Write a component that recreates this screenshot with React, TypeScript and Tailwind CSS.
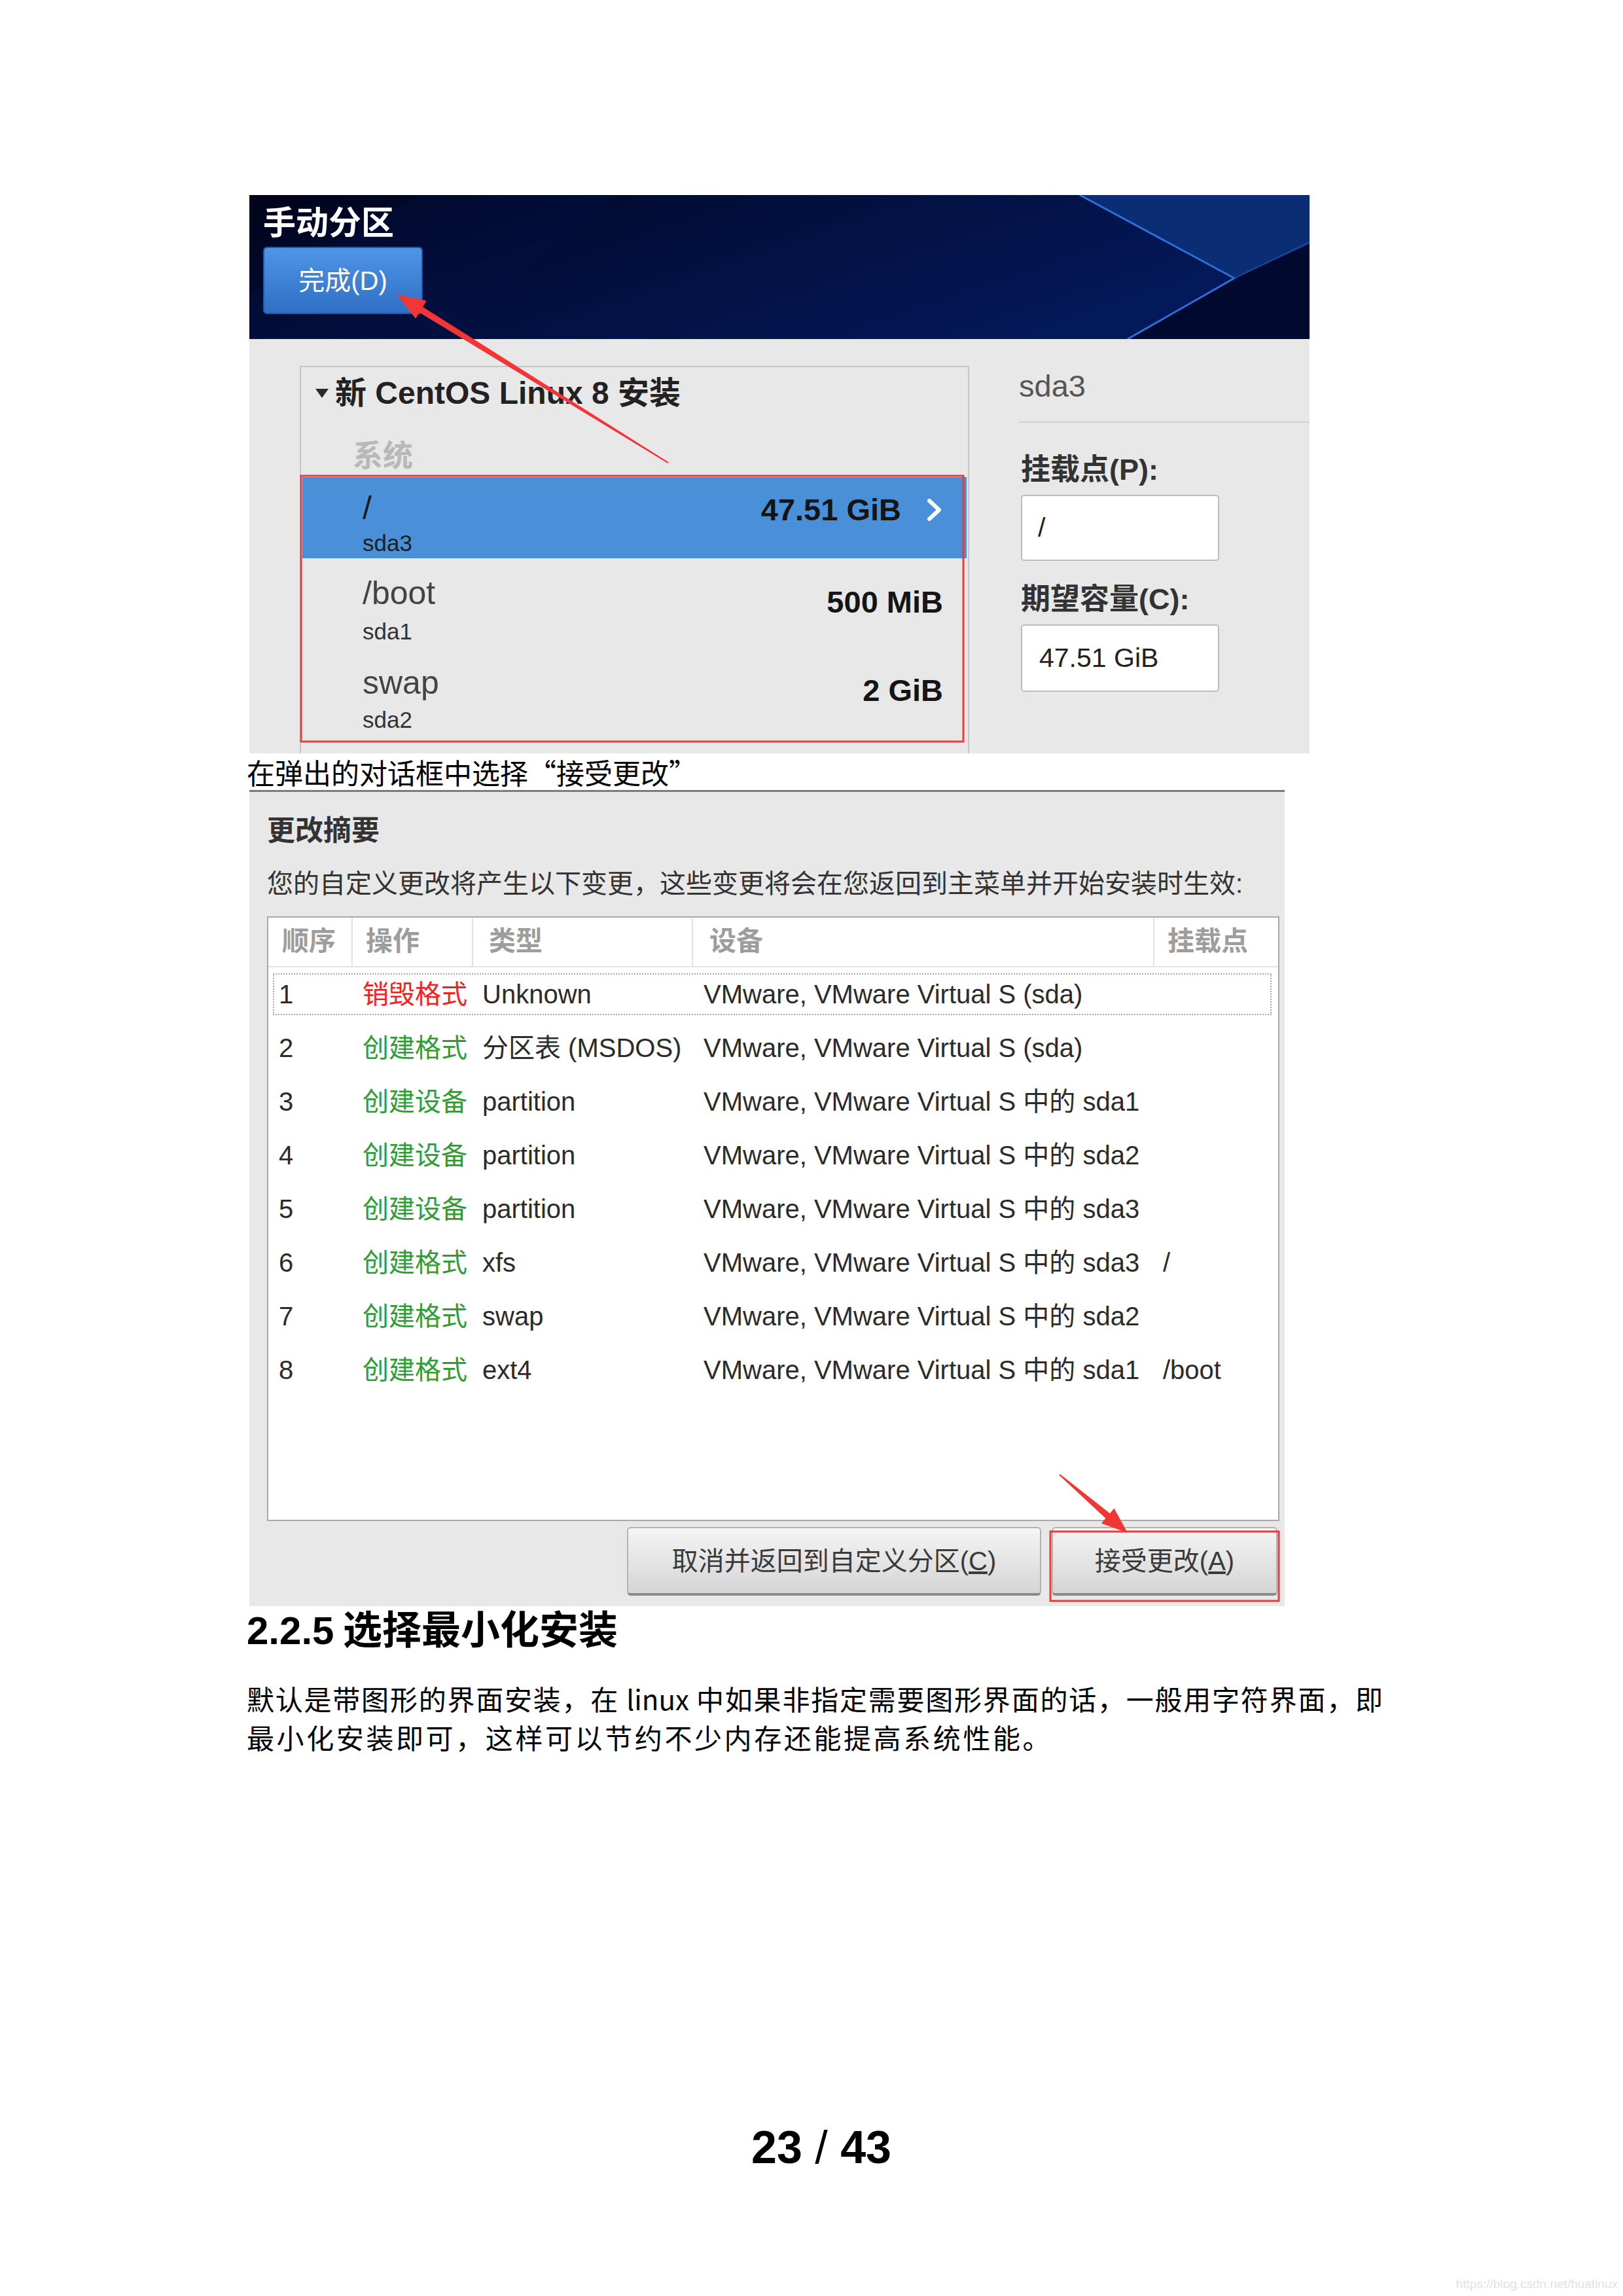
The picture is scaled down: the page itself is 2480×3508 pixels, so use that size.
import React from 'react';

type Pt = [number, number];

const UI = "[font-family:'Liberation_Sans','Noto_Sans_CJK_SC',sans-serif]";
const DOC = "[font-family:'Noto_Sans_CJK_SC','Liberation_Serif',serif]";

// tapered annotation arrow, narrow at the tail, head at the tip
function arrowPoints(tail: Pt, tip: Pt, head = 44, wing = 16, shaft = 5) {
  const dx = tip[0] - tail[0];
  const dy = tip[1] - tail[1];
  const len = Math.hypot(dx, dy);
  const ux = dx / len;
  const uy = dy / len;
  const nx = -uy;
  const ny = ux;
  const bx = tip[0] - ux * head;
  const by = tip[1] - uy * head;
  const pts: Pt[] = [
    [tail[0] + nx, tail[1] + ny],
    [bx + nx * shaft, by + ny * shaft],
    [bx + nx * wing, by + ny * wing],
    tip,
    [bx - nx * wing, by - ny * wing],
    [bx - nx * shaft, by - ny * shaft],
    [tail[0] - nx, tail[1] - ny],
  ];
  return pts.map(p => `${p[0].toFixed(1)},${p[1].toFixed(1)}`).join(' ');
}

function HeaderArt() {
  return (
    <svg className="absolute inset-0 w-full h-full" viewBox="0 0 1620 220" preserveAspectRatio="none">
      <defs>
        <linearGradient id="hdr" x1="0" y1="0" x2="1" y2="0.4">
          <stop offset="0" stopColor="#00031a" />
          <stop offset="0.45" stopColor="#020f3d" />
          <stop offset="1" stopColor="#04195a" />
        </linearGradient>
      </defs>
      <rect width="1620" height="220" fill="url(#hdr)" />
      <polygon points="0,220 0,150 260,0 560,0 300,220" fill="#031244" opacity="0.35" />
      <polygon points="1269,0 1620,0 1620,75 1505,127" fill="#0b2d74" />
      <polygon points="1505,127 1620,75 1620,220 1342,220" fill="#010a2e" />
      <polyline points="1269,0 1505,127 1342,220" fill="none" stroke="#2b6fd8" strokeWidth="3" />
      <line x1="1505" y1="127" x2="1620" y2="72" stroke="#1a4a9c" strokeWidth="2" />
    </svg>
  );
}

function Chevron() {
  return (
    <svg width="26" height="36" viewBox="0 0 26 36" className="ml-[38px]">
      <polyline points="5,4 20,18 5,32" fill="none" stroke="#ffffff" strokeWidth="6" strokeLinecap="round" strokeLinejoin="round" />
    </svg>
  );
}

function Partition() {
  return (
    <div className={`w-[1620px] h-[853px] flex flex-col ${UI}`}>
      <div className="relative h-[220px] pl-[21px] pt-[13px] overflow-hidden">
        <HeaderArt />
        <div className="relative text-[50px] leading-[60px] font-bold text-white">手动分区</div>
        <div className="relative mt-[6px] w-[244px] h-[103px] rounded-[6px] border-2 border-[#1d58aa] bg-gradient-to-b from-[#4f95e6] to-[#2f6fc5] flex items-center justify-center text-[40px] text-white">
          完成(D)
        </div>
      </div>

      <div className="flex-1 bg-[#e8e8e8] flex pl-[77px] pt-[41px] overflow-hidden">
        <div className="w-[1023px] border-x-2 border-t-2 border-[#c6c6c6]">
          <div className="flex items-center pt-[10px] pl-[22px] h-[70px]">
            <svg width="20" height="14" viewBox="0 0 20 14">
              <polygon points="0,0 20,0 10,14" fill="#2a2a2a" />
            </svg>
            <span className="ml-[10px] text-[48px] leading-[60px] font-bold text-[#222]">新 CentOS Linux 8 安装</span>
          </div>
          <div className="mt-[37px] pl-[79px] text-[46px] leading-[56px] font-bold text-[#b8b8b8]">系统</div>

          <div className="mt-[5px] mx-[2px] h-[124px] bg-[#4a90d9] flex justify-between pl-[92px] pr-[36px]">
            <div className="pt-[19px]">
              <div className="text-[50px] leading-[56px] text-[#1a1a1a]">/</div>
              <div className="mt-[6px] text-[35px] leading-[40px] text-[#1e1e1e]">sda3</div>
            </div>
            <div className="pt-[22px] flex items-center h-[78px]">
              <span className="text-[47px] leading-[56px] font-bold text-[#151515]">47.51 GiB</span>
              <Chevron />
            </div>
          </div>

          <div className="mx-[2px] h-[130px] flex justify-between pl-[92px] pr-[36px]">
            <div className="pt-[25px]">
              <div className="text-[50px] leading-[56px] text-[#444]">/boot</div>
              <div className="mt-[11px] text-[35px] leading-[40px] text-[#333]">sda1</div>
            </div>
            <div className="pt-[39px] text-[47px] leading-[56px] font-bold text-[#151515]">500 MiB</div>
          </div>

          <div className="mx-[2px] flex justify-between pl-[92px] pr-[36px]">
            <div className="pt-[32px]">
              <div className="text-[50px] leading-[56px] text-[#444]">swap</div>
              <div className="mt-[9px] text-[35px] leading-[40px] text-[#333]">sda2</div>
            </div>
            <div className="pt-[44px] text-[47px] leading-[56px] font-bold text-[#151515]">2 GiB</div>
          </div>
        </div>

        <div className="ml-[76px] flex-1 pt-[3px]">
          <div className="text-[47px] leading-[56px] text-[#555]">sda3</div>
          <div className="mt-[26px] h-[2px] bg-[#d0d0d0]" />
          <div className="mt-[44px] pl-[3px] text-[45px] leading-[56px] font-bold text-[#333]">挂载点(P):</div>
          <div className="mt-[10px] ml-[3px] w-[303px] h-[101px] bg-white border-2 border-[#bdbdbd] rounded-[5px] flex items-center pl-[24px] text-[41px] text-[#222]">
            /
          </div>
          <div className="mt-[31px] pl-[3px] text-[45px] leading-[56px] font-bold text-[#333]">期望容量(C):</div>
          <div className="mt-[10px] ml-[3px] w-[303px] h-[103px] bg-white border-2 border-[#bdbdbd] rounded-[5px] flex items-center pl-[26px] text-[41px] text-[#222]">
            47.51 GiB
          </div>
        </div>
      </div>
    </div>
  );
}

interface Change {
  no: number;
  action: string;
  destroy?: boolean;
  type: string;
  device: string;
  mount?: string;
}

const changes: Change[] = [
  { no: 1, action: '销毁格式', destroy: true, type: 'Unknown', device: 'VMware, VMware Virtual S (sda)' },
  { no: 2, action: '创建格式', type: '分区表 (MSDOS)', device: 'VMware, VMware Virtual S (sda)' },
  { no: 3, action: '创建设备', type: 'partition', device: 'VMware, VMware Virtual S 中的 sda1' },
  { no: 4, action: '创建设备', type: 'partition', device: 'VMware, VMware Virtual S 中的 sda2' },
  { no: 5, action: '创建设备', type: 'partition', device: 'VMware, VMware Virtual S 中的 sda3' },
  { no: 6, action: '创建格式', type: 'xfs', device: 'VMware, VMware Virtual S 中的 sda3', mount: '/' },
  { no: 7, action: '创建格式', type: 'swap', device: 'VMware, VMware Virtual S 中的 sda2' },
  { no: 8, action: '创建格式', type: 'ext4', device: 'VMware, VMware Virtual S 中的 sda1', mount: '/boot' },
];

const cols = 'grid grid-cols-[129px_184px_336px_705px_1fr]';

function Summary() {
  return (
    <div className={`w-[1582px] h-[1247px] bg-[#e8e8e8] border-t-[3px] border-[#7c7c7c] flex flex-col pl-[27px] ${UI}`}>
      <div className="pt-[32px] text-[43px] leading-[54px] font-bold text-[#333]">更改摘要</div>
      <div className="mt-[29px] text-[40px] leading-[50px] text-[#333]">
        您的自定义更改将产生以下变更，这些变更将会在您返回到主菜单并开始安装时生效:
      </div>

      <div className="mt-[25px] w-[1547px] h-[924px] bg-white border-2 border-[#a9a9a9]">
        <div className={`${cols} h-[76px] border-b-2 border-[#e2e2e2] text-[41px] font-bold text-[#9d9d9d]`}>
          <div className="flex items-center pl-[21px] border-r-2 border-[#e2e2e2]">顺序</div>
          <div className="flex items-center pl-[20px] border-r-2 border-[#e2e2e2]">操作</div>
          <div className="flex items-center pl-[24px] border-r-2 border-[#e2e2e2]">类型</div>
          <div className="flex items-center pl-[25px] border-r-2 border-[#e2e2e2]">设备</div>
          <div className="flex items-center pl-[20px]">挂载点</div>
        </div>
        {changes.map(c => (
          <div key={c.no} className={`relative ${cols} h-[82px] items-center text-[40px] text-[#2b2b2b]`}>
            {c.no === 1 && (
              <div className="absolute left-[7px] right-[10px] top-[9px] bottom-[9px] border-2 border-dotted border-[#a3a3a3]" />
            )}
            <div className="pl-[16px]">{c.no}</div>
            <div className={`pl-[15px] ${c.destroy ? 'text-[#ff1c1c]' : 'text-[#2f9e32]'}`}>{c.action}</div>
            <div className="pl-[14px] whitespace-nowrap">{c.type}</div>
            <div className="pl-[16px] whitespace-nowrap">{c.device}</div>
            <div className="pl-[13px]">{c.mount ?? ''}</div>
          </div>
        ))}
      </div>

      <div className="mt-[9px] flex justify-end gap-[16px] pr-[11px]">
        <div className="w-[633px] h-[105px] rounded-[6px] border-2 border-b-[4px] border-[#b3b3b3] border-b-[#8a8a8a] bg-gradient-to-b from-[#f5f5f5] to-[#d5d5d5] flex items-center justify-center text-[40px] text-[#3a3a3a]">
          取消并返回到自定义分区(<span className="underline">C</span>)
        </div>
        <div className="w-[345px] h-[105px] rounded-[6px] border-2 border-b-[4px] border-[#b3b3b3] border-b-[#8a8a8a] bg-gradient-to-b from-[#f5f5f5] to-[#d5d5d5] flex items-center justify-center text-[40px] text-[#3a3a3a]">
          接受更改(<span className="underline">A</span>)
        </div>
      </div>
    </div>
  );
}

function Annotations() {
  return (
    <svg className="absolute top-0 left-0 w-[2480px] h-[3508px] pointer-events-none" viewBox="0 0 2480 3508">
      <rect x="460" y="727" width="1012" height="406" fill="none" stroke="#f03a3a" strokeWidth="3" />
      <rect x="1605" y="2340" width="349" height="106" fill="none" stroke="#f03a3a" strokeWidth="3" />
      <polygon points={arrowPoints([1021, 707], [606, 450])} fill="#f23636" />
      <polygon points={arrowPoints([1619, 2253], [1723, 2342], 40, 15, 5)} fill="#f23636" />
    </svg>
  );
}

export default function App() {
  return (
    <div className={`relative w-[2480px] h-[3508px] bg-white overflow-hidden ${DOC}`}>
      <div className="pt-[298px] pl-[381px]">
        <Partition />
      </div>

      <div className="h-[56px] pl-[377px] flex items-center text-[43px] text-black">
        在弹出的对话框中选择“接受更改”
      </div>

      <div className="pl-[381px]">
        <Summary />
      </div>

      <div className="pl-[377px] h-[64px] text-[60px] leading-[64px] font-bold text-black">
        <span className="[font-family:'Liberation_Sans','Noto_Sans_CJK_SC',sans-serif]">2.2.5</span> 选择最小化安装
      </div>

      <div className="mt-[47px] ml-[377px] w-[1736px] text-[42px] leading-[59px] text-black">
        <div className="whitespace-nowrap text-justify [text-align-last:justify]">
          默认是带图形的界面安装，在 linux 中如果非指定需要图形界面的话，一般用字符界面，即
        </div>
        <div className="whitespace-nowrap tracking-[3.6px]">最小化安装即可，这样可以节约不少内存还能提高系统性能。</div>
      </div>

      <div className="mt-[558px] pl-[30px] text-center text-[70px] leading-[80px] font-bold text-black [font-family:'Liberation_Sans',sans-serif]">
        23 <span className="font-normal">/</span> 43
      </div>

      <div className="mt-[157px] pr-[8px] text-right text-[19px] leading-[24px] text-[#e2e2e2] [font-family:'Liberation_Sans',sans-serif]">
        https://blog.csdn.net/huatinux
      </div>

      <Annotations />
    </div>
  );
}
